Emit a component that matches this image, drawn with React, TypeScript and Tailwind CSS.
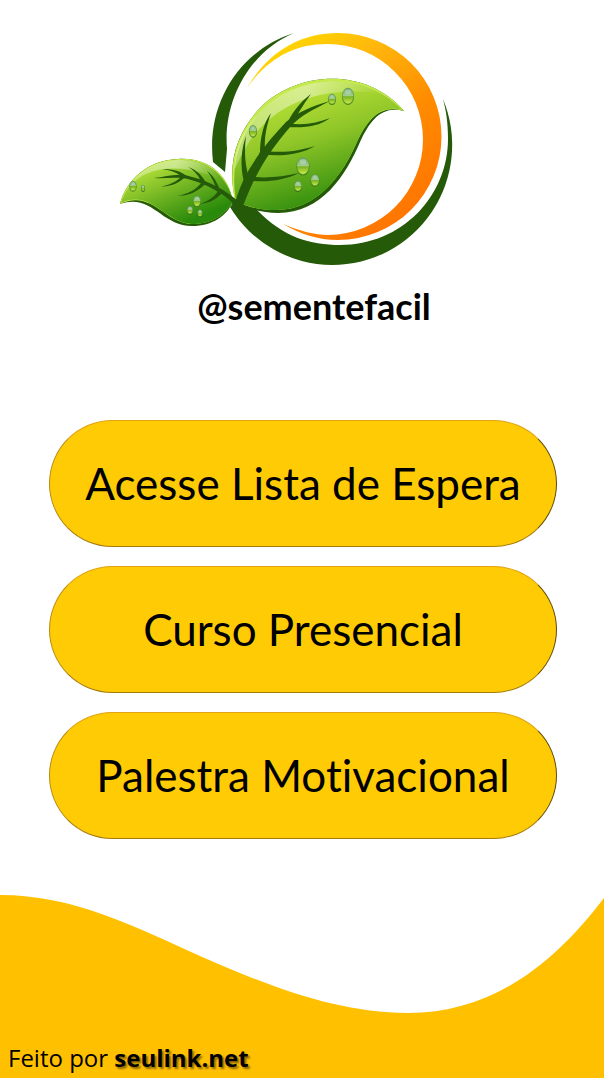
const links = [
  { label: "Acesse Lista de Espera", href: "#lista" },
  { label: "Curso Presencial", href: "#curso" },
  { label: "Palestra Motivacional", href: "#palestra" },
];

const drops = [
  [253, 131, 4, 6],
  [133, 186, 3.5, 5],
  [143, 188, 2, 3.2],
  [197, 201, 4, 5.5],
  [190, 210, 3, 4],
  [200, 213, 2.5, 3.5],
  [332, 99, 4, 5.2],
  [348, 96, 6, 8.2],
  [303, 166, 6.5, 8.7],
  [315, 180, 4.5, 6],
  [298, 186, 4, 5.3],
];

function Logo() {
  return (
    <svg viewBox="113 28 350 240" className="h-[240px] w-[350px]" role="img" aria-label="Semente Fácil">
      <defs>
        <linearGradient id="ring" x1="0.1" y1="0" x2="0.75" y2="1">
          <stop offset="0" stopColor="#ffe000" />
          <stop offset="0.3" stopColor="#ffb70c" />
          <stop offset="0.6" stopColor="#ff8c00" />
          <stop offset="1" stopColor="#ff7200" />
        </linearGradient>
        <linearGradient id="leaf" x1="0.25" y1="0.05" x2="0.62" y2="0.95">
          <stop offset="0" stopColor="#c0e63a" />
          <stop offset="0.45" stopColor="#8fc628" />
          <stop offset="1" stopColor="#2b8a0b" />
        </linearGradient>
        <linearGradient id="sprout" x1="0.2" y1="0.1" x2="0.75" y2="0.85">
          <stop offset="0" stopColor="#b9e33a" />
          <stop offset="0.5" stopColor="#72b522" />
          <stop offset="1" stopColor="#2a8a0b" />
        </linearGradient>
        <linearGradient id="gloss" x1="0" y1="0" x2="1" y2="0.2">
          <stop offset="0" stopColor="#fff" stopOpacity="0.25" />
          <stop offset="0.5" stopColor="#fff" stopOpacity="0.45" />
          <stop offset="1" stopColor="#fff" stopOpacity="0" />
        </linearGradient>
        <linearGradient id="drop" x1="0" y1="0" x2="0" y2="1">
          <stop offset="0" stopColor="#6fa878" />
          <stop offset="0.48" stopColor="#a3ce8c" />
          <stop offset="0.55" stopColor="#78b421" />
          <stop offset="1" stopColor="#d0ee4a" />
        </linearGradient>
      </defs>

      <g fill="#245a08">
        <path d="M294 33C240 50 206 103 213 162L225 172L227 149C223 101 249 52 294 33Z" />
        <path d="M443 99A120 120 0 0 1 332 265A120 120 0 0 1 230 207L238 198L257 210C283 237 310 245 340 245C402 245 448 196 448 139C448 122 446 110 443 99Z" />
      </g>
      <path
        fill="url(#ring)"
        d="M247 88C268 52 300 33 338 33A103.5 103.5 0 0 1 338 240C318 240 300 234 283 224C300 231 315 235 328 235A95.5 95.5 0 0 0 327 44C295 44 268 58 247 88Z"
      />

      <path fill="#245a08" d="M236 203C226 165 236 132 262 106C298 72 365 66 404 111C382 105 370 120 360 142C346 175 322 213 278 213C262 213 248 209 236 203Z" />
      <path fill="#c5ea4b" d="M235 201C227 165 236 132 262 106C298 72 365 66 404 111C380 104 368 119 357 142C343 174 318 210 276 210C260 210 247 207 235 201Z" />
      <path fill="url(#leaf)" d="M236 201C230 165 239 134 264 108C300 75 363 69 402 110C380 104 368 119 357 142C343 174 318 210 276 210C260 210 247 207 236 201Z" />
      <path fill="url(#gloss)" d="M235 169C234 146 246 125 264 108C297 77 350 74 380 93C330 87 300 99 282 110C258 125 245 145 235 169Z" />
      <g fill="#245a08">
        <path d="M230 204L236 200C242 178 256 154 286 122C298 112 312 106 330 101C314 109 300 116 291 126C270 150 256 172 243 206Z" />
        <path d="M286 126C291 114 299 103 311 94C303 105 297 115 291 126Z" />
        <path d="M260 154C260 138 263 124 271 113C266 127 264 139 265 151Z" />
        <path d="M244 182C240 166 241 150 246 136C244 152 245 165 249 178Z" />
        <path d="M288 123C303 126 317 123 330 118C318 127 304 128 287 127Z" />
        <path d="M261 150C280 154 299 151 315 146C300 155 280 157 259 154Z" />
        <path d="M246 176C264 179 282 177 299 173C283 181 264 183 244 180Z" />
      </g>

      <path fill="#245a08" d="M120 204C126 180 148 160 178 159C210 157 229 177 233 202C226 216 213 226 192 226C161 226 152 193 120 204Z" />
      <path fill="#c5ea4b" d="M120 204C126 180 148 160 178 159C210 157 229 177 233 201C226 214 213 224 192 224C164 223 152 189 120 204Z" />
      <path fill="url(#sprout)" d="M121 203C128 181 149 161 178 160C209 158 228 178 233 201C226 214 213 224 192 224C164 223 152 189 121 203Z" />
      <path fill="url(#gloss)" d="M126 192C139 169 157 161 178 160C203 159 218 171 226 184C202 168 168 164 146 174C137 178 131 184 126 192Z" />
      <g fill="#245a08">
        <path d="M236 206C224 194 209 185 191 180C178 176 166 179 154 178C167 177 178 172 192 177C212 182 226 191 238 201Z" />
        <path d="M184 178C178 173 171 170 162 169C173 169 181 171 188 177Z" />
        <path d="M184 178C178 184 170 186 161 187C172 184 177 181 182 176Z" />
        <path d="M202 184C200 177 195 171 188 167C197 170 203 176 207 185Z" />
        <path d="M206 183C198 192 188 196 177 196C188 194 196 190 202 182Z" />
        <path d="M217 191C215 184 212 177 207 171C214 176 218 184 221 193Z" />
        <path d="M222 193C216 200 209 203 200 204C209 201 214 197 219 190Z" />
      </g>

      {drops.map(([x, y, rx, ry]) => (
        <g key={`${x}-${y}`}>
          <ellipse cx={x} cy={y + 0.8} rx={rx} ry={ry} fill="#2d6b16" opacity="0.8" />
          <ellipse cx={x} cy={y} rx={rx - 0.3} ry={ry - 0.3} fill="url(#drop)" stroke="#5b9440" strokeWidth="0.5" />
          <ellipse cx={x} cy={y - ry * 0.5} rx={rx * 0.5} ry={ry * 0.28} fill="#d5ebcd" opacity="0.4" />
        </g>
      ))}
    </svg>
  );
}

export default function App() {
  return (
    <div className="flex min-h-screen flex-col bg-white text-black">
      <header className="flex flex-col items-center pt-7">
        <div className="pr-7">
          <Logo />
        </div>
        <h1 className="pt-4 pl-6 font-['Lato','Liberation_Sans',sans-serif] text-4xl leading-[44px] font-bold">
          @sementefacil
        </h1>
      </header>

      <nav className="flex flex-col gap-[19px] pt-[92px] pr-[47px] pb-14 pl-[49px]">
        {links.map((link) => (
          <a
            key={link.href}
            href={link.href}
            className="flex h-[127px] items-center justify-center rounded-full border border-t-[#dfa313] border-r-[#604b08] border-b-[#a67c0c] border-l-[#b88b10] bg-[#ffcb05] pb-0.5 text-center font-['Lato','Liberation_Sans',sans-serif] text-[44px] leading-[56px] [font-variant-ligatures:none]"
          >
            {link.label}
          </a>
        ))}
      </nav>

      <footer className="mt-auto">
        <svg viewBox="0 0 604 118" preserveAspectRatio="none" className="block h-[118px] w-full" aria-hidden="true">
          <path fill="#ffc000" d="M0 0C75 0 135 32 200 61C275 94 340 118 408 118C488 118 550 74 604 3V118H0Z" />
        </svg>
        <p className="bg-[#ffc000] px-2 pt-[29px] pb-1 font-['Open_Sans','Noto_Sans',sans-serif] text-2xl leading-8">
          Feito por{" "}
          <a href="https://seulink.net" className="font-bold [text-shadow:2px_2px_2px_rgba(0,0,0,0.45)]">
            seulink.net
          </a>
        </p>
      </footer>
    </div>
  );
}
